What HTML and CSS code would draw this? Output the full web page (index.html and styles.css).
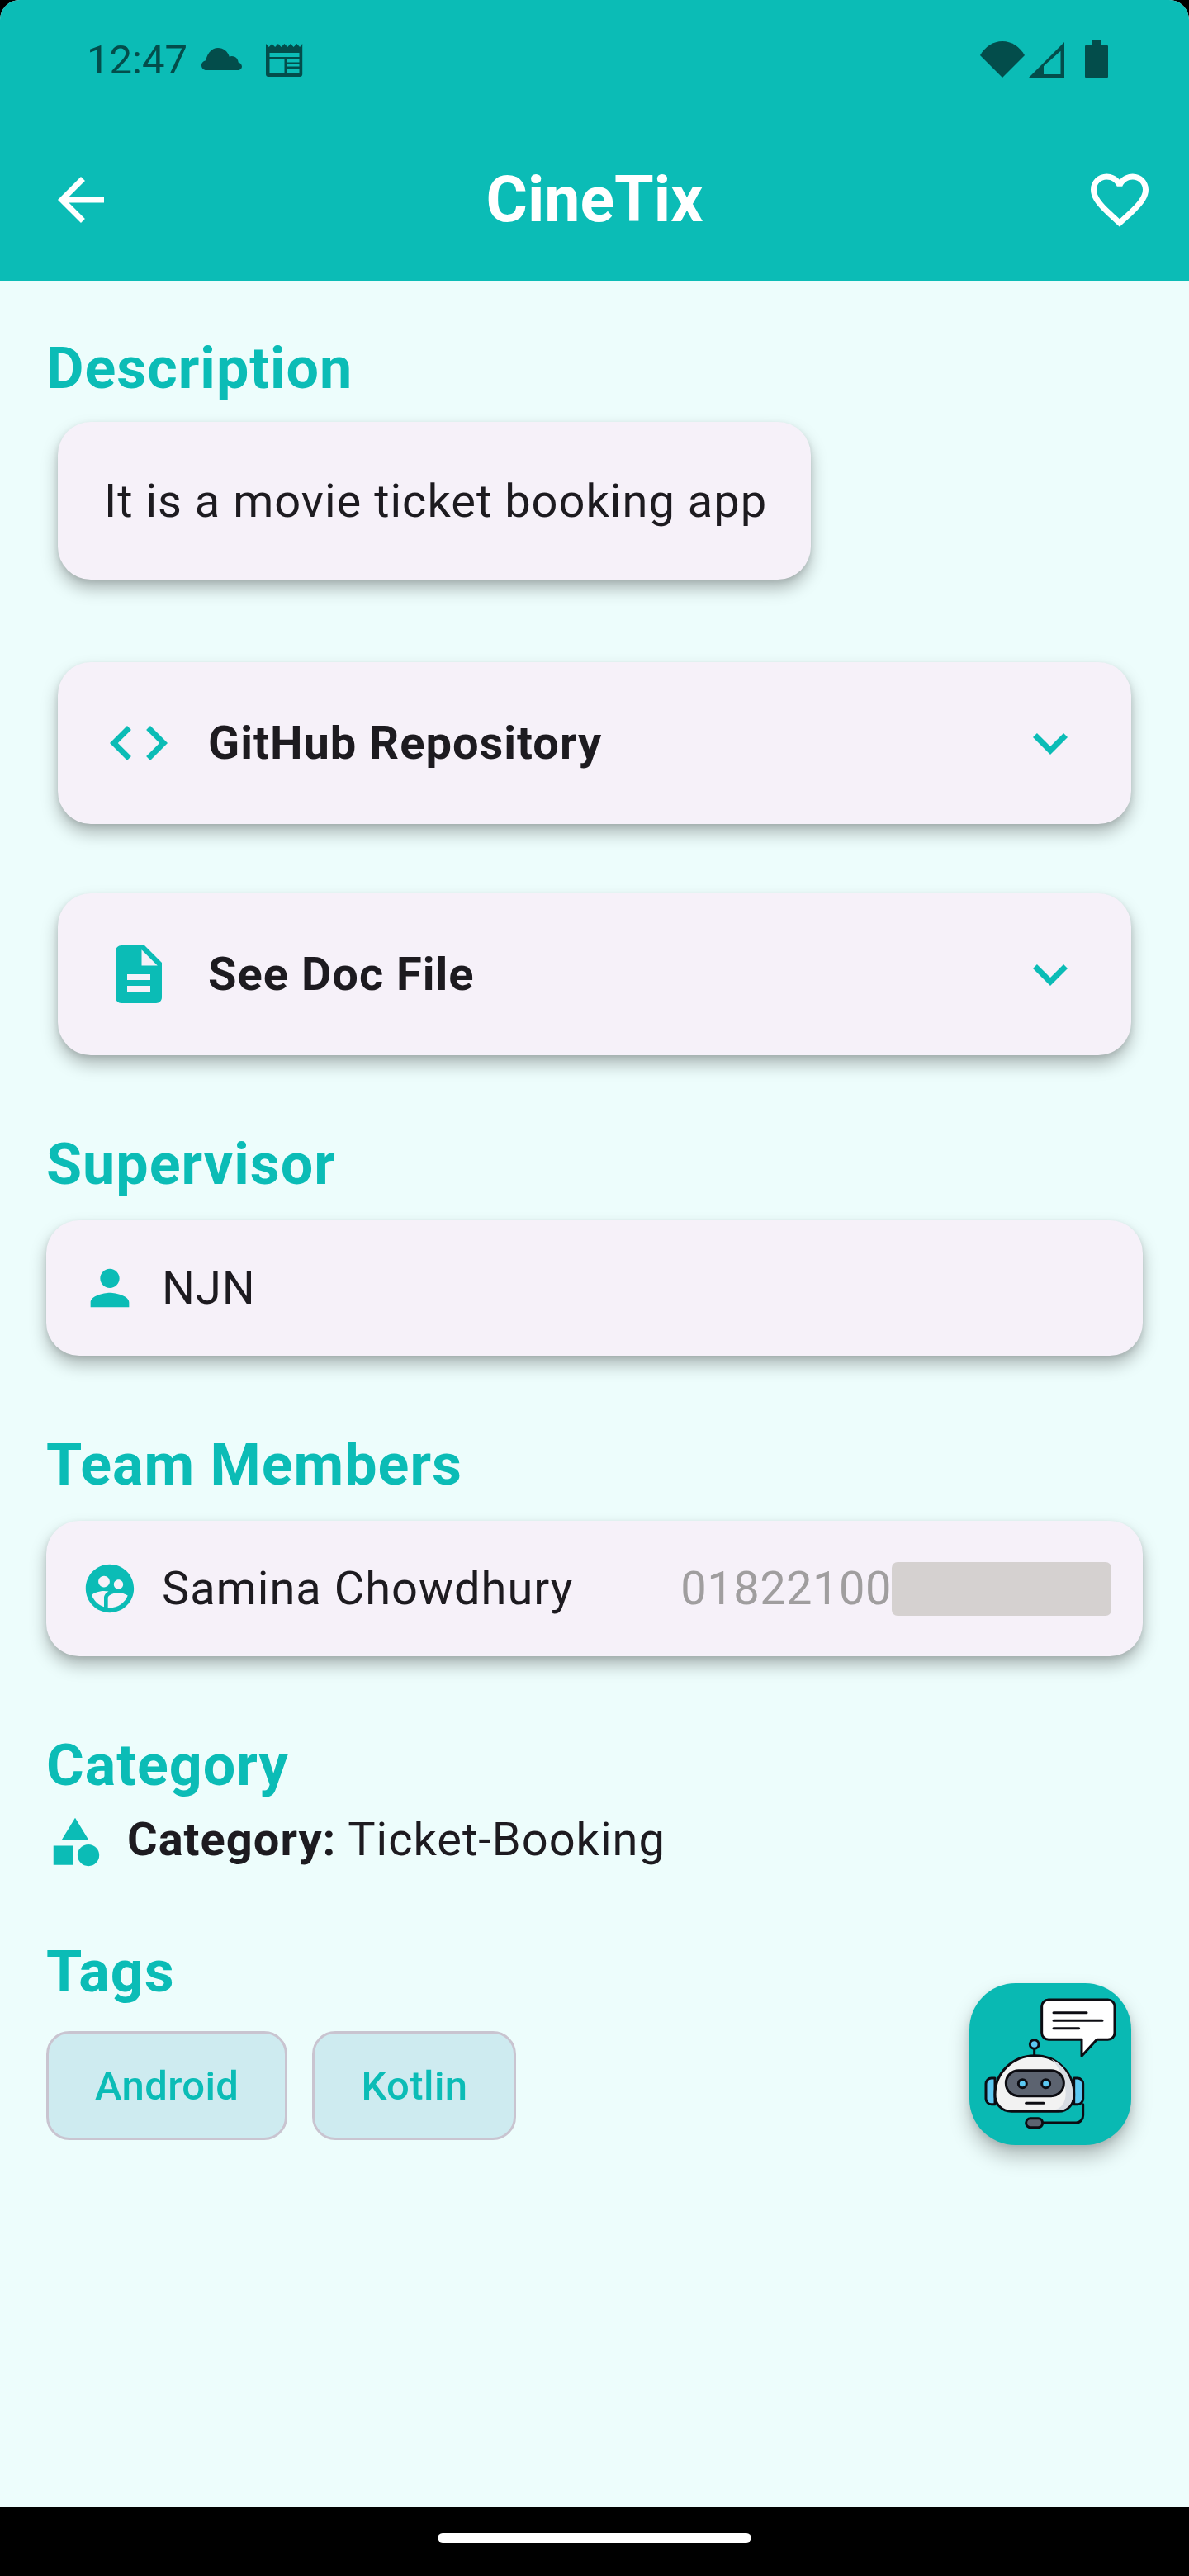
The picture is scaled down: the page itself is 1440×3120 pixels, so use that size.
FILE: index.html
```html
<!DOCTYPE html>
<html lang="en">
<head>
    <meta charset="UTF-8">
    <meta name="viewport" content="width=device-width, initial-scale=1.0">
    <title>CineTix</title>
    <link rel="stylesheet" href="styles.css">
</head>
<body>
    <div class="screen">
        <header class="top">
            <div class="status">
                <span class="time">12:47</span>
                <svg class="st-cloud" width="49" height="27" viewBox="0 0 49 27"><path d="M6 27C2.6 27 0 24.4 0 21.2 0 18 2.4 15.6 5.4 15.2 6.6 6.600 12.600 0 20 0c6.600 0 12 4.400 13.800 10.800 1-.5 1.900-.7 3-.7 4.200 0 7.500 3.200 7.800 7.300C47 18 49 20 49 22.600 49 25 47 27 44.600 27z"/></svg>
                <svg class="st-news" width="45" height="40" viewBox="0 0 45 40"><path fill-rule="evenodd" d="M0 0l3.700 4 3.700-4 3.700 4 3.800-4 3.700 4 3.900-4 3.700 4 3.700-4 3.700 4 3.800-4 3.700 4 3.100-4v37c0 1.700-1.300 3-3 3H3c-1.700 0-3-1.300-3-3zM4.500 11v5h36v-5zM4.500 19v16.500h18V19zm21 0v3.500h15V19zm0 6v2.500h15V25zm0 5.500v5h15v-5z"/></svg>
                <span class="st-gap"></span>
                <svg class="st-wifi" width="54" height="44" viewBox="0 0 54 44"><path d="M0 17C6 6.500 16 0 27 0s21 6.500 27 17L27 44z"/></svg>
                <svg class="st-signal" width="44" height="44" viewBox="0 0 44 44"><path fill-rule="evenodd" d="M44 0v44H0zM39.500 10.700L19 29v10h20.500z"/></svg>
                <svg class="st-batt" width="28" height="46" viewBox="0 0 28 46"><path d="M8 0h12v5h5.500c1.400 0 2.500 1.100 2.500 2.500v36c0 1.400-1.100 2.500-2.500 2.500h-23C1.100 46 0 44.900 0 43.500v-36C0 6.100 1.100 5 2.500 5H8z"/></svg>
            </div>
            <div class="appbar">
                <svg class="ic84" viewBox="0 0 24 24"><path fill="#fff" d="M20 11H7.830l5.590-5.590L12 4l-8 8 8 8 1.410-1.410L7.830 13H20v-2z"/></svg>
                <h1>CineTix</h1>
                <svg class="ic84" viewBox="0 0 24 24"><path fill="#fff" d="M16.500 3c-1.740 0-3.410.81-4.500 2.090C10.910 3.810 9.240 3 7.500 3 4.420 3 2 5.420 2 8.500c0 3.780 3.400 6.860 8.550 11.540L12 21.350l1.450-1.320C18.600 15.360 22 12.280 22 8.500 22 5.420 19.580 3 16.500 3zm-4.400 15.550l-.1.1-.1-.1C7.140 14.240 4 11.390 4 8.500 4 6.500 5.500 5 7.500 5c1.540 0 3.040.99 3.570 2.360h1.870C13.460 5.990 14.960 5 16.500 5c2 0 3.500 1.500 3.500 3.500 0 2.890-3.140 5.740-7.900 10.050z"/></svg>
            </div>
        </header>

        <main class="content">
            <h2 class="sec-title first">Description</h2>
            <div class="card desc">It is a movie ticket booking app</div>

            <div class="card link-card repo">
                <svg class="ic84" viewBox="0 0 24 24"><path class="teal" d="M9.400 16.600L4.800 12l4.600-4.600L8 6l-6 6 6 6 1.400-1.400zm5.200 0l4.600-4.600-4.600-4.600L16 6l6 6-6 6-1.400-1.400z"/></svg>
                <span class="link-text">GitHub Repository</span>
                <svg class="ic84" viewBox="0 0 24 24"><path class="teal" d="M16.590 8.590L12 13.170 7.410 8.590 6 10l6 6 6-6z"/></svg>
            </div>
            <div class="card link-card doc">
                <svg class="ic84" viewBox="0 0 24 24"><path class="teal" d="M14 2H6c-1.100 0-1.990.9-1.990 2L4 20c0 1.100.89 2 1.990 2H18c1.100 0 2-.9 2-2V8l-6-6zm2 16H8v-2h8v2zm0-4H8v-2h8v2zm-3-5V3.500L18.500 9H13z"/></svg>
                <span class="link-text">See Doc File</span>
                <svg class="ic84" viewBox="0 0 24 24"><path class="teal" d="M16.590 8.590L12 13.170 7.410 8.590 6 10l6 6 6-6z"/></svg>
            </div>

            <h2 class="sec-title after-card">Supervisor</h2>
            <div class="card person">
                <svg class="ic70" viewBox="0 0 24 24"><path class="teal" d="M12 12c2.210 0 4-1.790 4-4s-1.790-4-4-4-4 1.790-4 4 1.790 4 4 4zm0 2c-2.670 0-8 1.340-8 4v2h16v-2c0-2.660-5.330-4-8-4z"/></svg>
                <span class="person-name">NJN</span>
            </div>

            <h2 class="sec-title after-card">Team Members</h2>
            <div class="card person">
                <svg class="ic70" viewBox="0 0 24 24"><path class="teal" d="M11.990 2c-5.520 0-10 4.480-10 10s4.480 10 10 10 10-4.480 10-10-4.480-10-10-10zm3.610 6.340c1.070 0 1.930.86 1.930 1.930 0 1.070-.86 1.930-1.930 1.930-1.070 0-1.930-.86-1.930-1.930-.01-1.070.86-1.930 1.930-1.930zm-6-1.580c1.300 0 2.360 1.060 2.360 2.360 0 1.300-1.060 2.360-2.360 2.360s-2.360-1.060-2.360-2.360c0-1.310 1.050-2.360 2.360-2.360zm0 9.130v3.750c-2.400-.75-4.300-2.600-5.140-4.960 1.050-1.120 3.670-1.690 5.140-1.690.53 0 1.200.08 1.900.22-1.640.87-1.900 2.020-1.900 2.680zM11.990 20c-.27 0-.53-.01-.79-.04v-4.070c0-1.420 2.940-2.130 4.400-2.130 1.070 0 2.920.39 3.840 1.150-1.170 2.970-4.060 5.090-7.450 5.090z"/></svg>
                <span class="person-name">Samina Chowdhury</span>
                <span class="phone">01822100<span class="redact"></span></span>
            </div>

            <h2 class="sec-title after-card cat-title">Category</h2>
            <div class="cat-row">
                <svg class="ic70" viewBox="0 0 24 24"><path class="teal" d="M12 2l-5.500 9h11zM3 13.500h8v8H3z"/><circle class="teal" cx="17.500" cy="17.500" r="4.500"/></svg>
                <span class="cat-text"><b>Category:</b> Ticket-Booking</span>
            </div>

            <h2 class="sec-title after-cat">Tags</h2>
            <div class="tags">
                <span class="tag">Android</span>
                <span class="tag">Kotlin</span>
            </div>

            <div class="fab">
                <svg width="196" height="196" viewBox="102 65 588 588" fill="none" stroke="#0c0c12" stroke-width="9" stroke-linecap="round" stroke-linejoin="round">
                    <path fill="#fff" d="M390 125H605c14 0 25 11 25 25v95c0 14-11 25-25 25H565l-55 60v-60H390c-14 0-25-11-25-25V150c0-14 11-25 25-25z"/>
                    <path d="M408 172H528M408 201H585M408 229H500"/>
                    <path d="M338 303V328"/>
                    <circle cx="338" cy="287" r="16" fill="#5cc8f2"/>
                    <path fill="#5cc8f2" d="M195 410H182c-11 0-20 9-20 20v55c0 11 9 20 20 20h13zM482 410h13c11 0 20 9 20 20v55c0 11-9 20-20 20H482z"/>
                    <path fill="#f2f2f2" d="M255 531C220 531 195 505 195 470 195 390 260 328 340 328 420 328 482 390 482 470 482 505 460 531 425 531z"/>
                    <path fill="#d8dce3" stroke="none" d="M400 340C450 365 478 415 478 470 478 500 460 527 425 527H395C435 527 452 500 452 465 452 420 430 370 400 340z"/>
                    <rect x="235" y="382" width="210" height="93" rx="46" fill="#5c6370"/>
                    <circle cx="295" cy="430" r="15" fill="#5cc8f2"/>
                    <circle cx="380" cy="430" r="15" fill="#5cc8f2"/>
                    <path d="M308 501H372"/>
                    <path d="M515 505V545C515 560 505 572 490 572H365"/>
                    <rect x="308" y="556" width="60" height="33" rx="16" fill="#5c6370"/>
                </svg>
            </div>
        </main>

        <footer class="navbar"><span class="pill"></span></footer>
    </div>
</body>
</html>
```

FILE: styles.css
```css
* {
    box-sizing: border-box;
}
html, body {
    margin: 0;
    background: #000;
}
body {
    font-family: Roboto, "Liberation Sans", sans-serif;
    color: #1d1b20;
}
.screen {
    width: 1440px;
    height: 3120px;
    display: flex;
    flex-direction: column;
    border-radius: 24px 24px 0 0;
    overflow: hidden;
    background: #edfdfc;
}
.top {
    height: 340px;
    background: #0bbcb6;
}
.status {
    height: 144px;
    padding: 50px 98px 0 105px;
    display: flex;
    align-items: flex-start;
    color: #034d4b;
}
.status svg {
    fill: #034d4b;
    flex: none;
}
.time {
    font-size: 49px;
    line-height: 46px;
    width: 139px;
}
.st-cloud {
    margin-top: 8px;
}
.st-news {
    margin: 3px 0 0 29px;
}
.st-gap {
    flex: 1;
}
.st-signal {
    margin: 1px 0 0 4px;
}
.st-batt {
    margin: -1px 0 0 25px;
}
.appbar {
    height: 196px;
    padding: 0 42px 0 56px;
    display: flex;
    align-items: center;
    justify-content: space-between;
}
.appbar h1 {
    margin: 0;
    padding-right: 14px;
    font-size: 77px;
    font-weight: 700;
    color: #fff;
}
.ic84 {
    width: 84px;
    height: 84px;
    flex: none;
}
.ic70 {
    width: 70px;
    height: 70px;
    flex: none;
}
.teal {
    fill: #0bbcb6;
}
.content {
    position: relative;
    flex: 1;
    padding: 0 56px;
}
.sec-title {
    margin: 0 0 26px;
    font-size: 70px;
    line-height: 84px;
    font-weight: 700;
    letter-spacing: 1px;
    color: #0bbcb6;
}
.sec-title.first {
    margin-top: 64px;
    margin-bottom: 23px;
}
.after-card {
    margin-top: 90px;
}
.cat-title {
    margin-bottom: 16px;
}
.after-cat {
    margin-top: 80px;
    margin-bottom: 30px;
}
.card {
    background: #f6f1f9;
    border-radius: 40px;
    box-shadow: 0 11px 20px rgba(0, 0, 0, .27), 0 3px 7px rgba(0, 0, 0, .1);
}
.desc {
    width: 912px;
    height: 191px;
    margin-left: 14px;
    padding: 0 56px;
    display: flex;
    align-items: center;
    font-size: 56px;
    letter-spacing: 1px;
    white-space: nowrap;
}
.link-card {
    height: 196px;
    margin: 0 14px;
    padding: 0 56px;
    display: flex;
    align-items: center;
    gap: 42px;
}
.repo {
    margin-top: 100px;
}
.doc {
    margin-top: 84px;
}
.link-text {
    flex: 1;
    font-size: 56px;
    font-weight: 700;
    letter-spacing: 1px;
}
.person {
    height: 164px;
    padding: 0 38px 0 42px;
    display: flex;
    align-items: center;
    gap: 28px;
}
.person-name {
    flex: 1;
    font-size: 56px;
    letter-spacing: 1px;
}
.phone {
    display: flex;
    align-items: center;
    font-size: 56px;
    letter-spacing: .5px;
    color: #a09e9f;
}
.redact {
    width: 266px;
    height: 65px;
    background: #d5d1d0;
    border-radius: 7px;
}
.cat-row {
    height: 70px;
    display: flex;
    align-items: center;
    gap: 28px;
}
.cat-text {
    padding-bottom: 6px;
    font-size: 56px;
    letter-spacing: 1px;
}
.tags {
    display: flex;
    gap: 30px;
}
.tag {
    height: 132px;
    padding: 0 56px;
    display: flex;
    align-items: center;
    background: #ceebf0;
    border: 3.5px solid #c9c4d0;
    border-radius: 28px;
    font-size: 49px;
    font-weight: 500;
    letter-spacing: .4px;
    color: #0bbcb6;
}
.fab {
    position: absolute;
    left: 1174px;
    top: 2062px;
    width: 196px;
    height: 196px;
    background: #09b9b3;
    border-radius: 56px;
    box-shadow: 0 14px 24px rgba(0, 0, 0, .25), 0 4px 8px rgba(0, 0, 0, .1);
}
.fab svg {
    display: block;
}
.navbar {
    height: 84px;
    background: #000;
    display: flex;
    justify-content: center;
    padding-top: 32px;
}
.pill {
    width: 380px;
    height: 12px;
    border-radius: 6px;
    background: #fff;
}
```
